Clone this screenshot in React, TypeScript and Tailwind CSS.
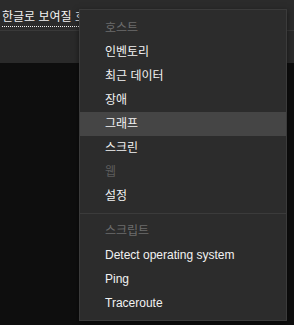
const hostItems = [
  { label: "인벤토리" },
  { label: "최근 데이터" },
  { label: "장애" },
  { label: "그래프", active: true },
  { label: "스크린" },
  { label: "웹", disabled: true },
  { label: "설정" },
];

const scriptItems = ["Detect operating system", "Ping", "Traceroute"];

const MenuRow = ({
  label,
  active,
  disabled,
}: {
  label: string;
  active?: boolean;
  disabled?: boolean;
}) => (
  <div
    className={
      "h-[24px] flex items-center pl-[25px] text-[12px] " +
      (active ? "bg-[#454545] " : "") +
      (disabled ? "text-[#5c5c5c]" : "text-[#f2f2f2]")
    }
  >
    {label}
  </div>
);

const App = () => {
  return (
    <div className="min-h-screen bg-[#0e0e0e] relative font-['Liberation_Sans','Noto_Sans_CJK_KR',sans-serif]">
      <div className="h-[31px] bg-[#2b2b2b] border-b border-[#393939] pl-[2px] pt-[4px]">
        <span className="inline-block text-[12px] leading-[17px] text-[#f2f2f2] border-b border-dotted border-[#f2f2f2]">
          한글로 보여질 호스트 이름
        </span>
      </div>
      <div className="h-[32px] bg-[#2a2a2a]"></div>

      {/* dropdown */}
      <div className="absolute left-[79px] top-[9px] w-[208px] bg-[#2c2c2c] border border-[#3b3b3b] pt-[6px] pb-[5px] shadow-[0_2px_6px_rgba(0,0,0,0.5)]">
        <div className="h-[24px] flex items-center pl-[25px] text-[12px] text-[#6c6c6c]">
          호스트
        </div>
        {hostItems.map((item) => (
          <MenuRow key={item.label} {...item} />
        ))}
        <div className="h-px bg-[#3b3b3b] my-[5px]"></div>
        <div className="h-[24px] flex items-center pl-[25px] text-[12px] text-[#6c6c6c]">
          스크립트
        </div>
        {scriptItems.map((s) => (
          <MenuRow key={s} label={s} />
        ))}
      </div>
    </div>
  );
};

export default App;
